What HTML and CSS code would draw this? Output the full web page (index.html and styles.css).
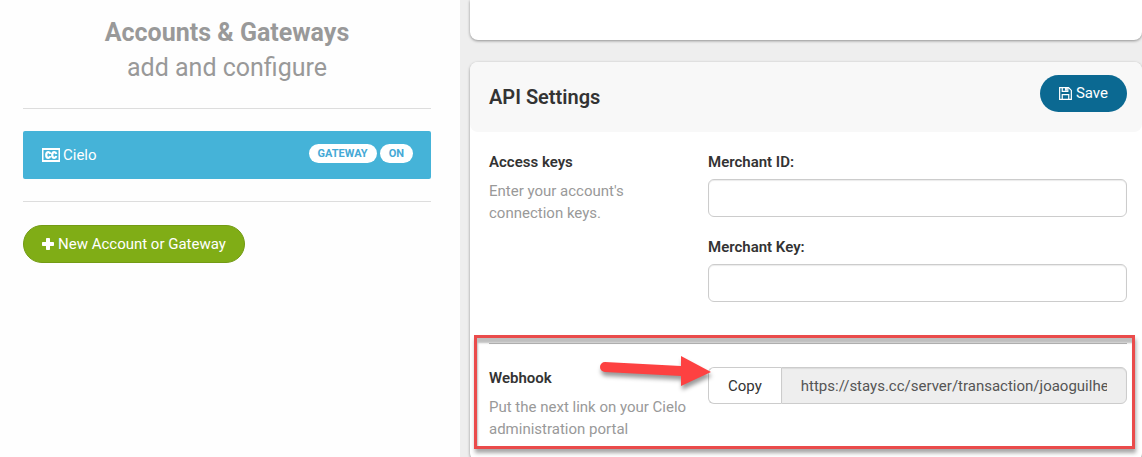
FILE: index.html
```
<!DOCTYPE html>
<html lang="en">
<head>
  <meta charset="UTF-8">
  <meta name="viewport" content="width=device-width, initial-scale=1.0">
  <title>Accounts &amp; Gateways</title>
  <link rel="stylesheet" href="styles.css">
</head>
<body>

<div class="layout">
  <aside class="sidebar">
    <h1 class="sidebar-title"><strong>Accounts &amp; Gateways</strong><br>add and configure</h1>
    <hr>
    <a class="account" href="#cielo">
      <svg class="icon-cc" viewBox="0 0 18 14" width="18" height="14" aria-hidden="true">
        <path fill="#fff" fill-rule="evenodd" d="M0 0h18v14H0zM1.500 2v10h15V2z"/>
        <path fill="none" stroke="#fff" stroke-width="2.200" d="M8.300 5.900C8 4.500 7.300 4.200 6.300 4.200 4.900 4.200 4.200 5.300 4.200 7s.7 2.800 2.100 2.800c1 0 1.700-.4 2-1.700M14.300 5.900C14 4.500 13.300 4.200 12.300 4.200c-1.400 0-2.100 1.100-2.100 2.800s.7 2.800 2.100 2.800c1 0 1.700-.4 2-1.700"/>
      </svg>
      <span class="account-name">Cielo</span>
      <span class="badge">GATEWAY</span>
      <span class="badge">ON</span>
    </a>
    <hr>
    <button class="btn btn-green" type="button">
      <svg viewBox="0 0 12 12" width="12" height="12" aria-hidden="true">
        <path fill="#fff" d="M4.800 0h2.400q.8 0 .8.800V4h3.200q.8 0 .8.800v2.400q0 .8-.8.800H8v3.200q0 .8-.8.800H4.800q-.8 0-.8-.8V8H.8Q0 8 0 7.200V4.800Q0 4 .8 4H4V.8Q4 0 4.800 0z"/>
      </svg>
      New Account or Gateway
    </button>
  </aside>

  <main class="content">
    <section class="card card-prev"></section>

    <section class="card">
      <header class="card-header">
        <h2>API Settings</h2>
        <button class="btn btn-blue" type="button">
          <svg viewBox="0 0 14 14" width="13" height="13" aria-hidden="true">
            <path fill="none" stroke="#fff" stroke-width="1.300" d="M.7.7h9.600l3 3v9.600H.7zM3.500.7v4h6v-4M3.500 13.300v-5h7v5"/>
            <path fill="#fff" d="M6.500 1h2v3h-2z"/>
          </svg>
          Save
        </button>
      </header>

      <div class="row">
        <div class="row-info">
          <h3>Access keys</h3>
          <p>Enter your account's connection keys.</p>
        </div>
        <div class="row-fields">
          <div class="field">
            <label for="merchant-id">Merchant ID:</label>
            <input class="input" type="text" id="merchant-id">
          </div>
          <div class="field">
            <label for="merchant-key">Merchant Key:</label>
            <input class="input" type="text" id="merchant-key">
          </div>
        </div>
      </div>

      <div class="row row-webhook">
        <div class="row-info">
          <h3 id="webhook-label">Webhook</h3>
          <p>Put the next link on your Cielo administration portal</p>
        </div>
        <div class="copy-group">
          <button class="btn-copy" type="button">Copy</button>
          <input class="input" type="text" aria-labelledby="webhook-label" value="https://stays.cc/server/transaction/joaoguilherme" readonly>
          <svg class="arrow" viewBox="0 0 124 44" width="124" height="44" aria-hidden="true">
            <path fill="#fd4141" d="M10 6 L86 10 V0 L116 16 L86 30 V20 L10 16 A5 5 0 0 1 10 6z"/>
          </svg>
        </div>
        <div class="highlight"></div>
      </div>
    </section>
  </main>
</div>

</body>
</html>
```

FILE: styles.css
```
* { box-sizing: border-box; }
html, body {
  height: 100%;
  margin: 0;
  overflow: hidden;
}
body {
  background: #eee;
  color: #333;
  font-family: Roboto, "Liberation Sans", sans-serif;
  font-size: 15px;
  line-height: 22px;
}
h1, h2, h3, p { margin: 0; }
button, input { font: inherit; color: inherit; }

.layout {
  display: grid;
  grid-template-columns: 460px minmax(0, 1fr);
  min-height: 100%;
}

/* sidebar */
.sidebar {
  background: #fefefe;
  padding: 15px 29px 20px 23px;
}
.sidebar-title {
  color: #999;
  font-size: 25px;
  font-weight: 400;
  line-height: 35px;
  text-align: center;
}
.sidebar hr {
  border: 0;
  border-top: 1px solid #ddd;
  margin: 22px 0 23px;
}
.sidebar-title + hr { margin: 23px 0 22px; }
.account {
  display: flex;
  align-items: center;
  gap: 3px;
  height: 48px;
  padding: 0 18px 0 19px;
  border-radius: 2px;
  background: #45b3d8;
  color: #fff;
  text-decoration: none;
}
.account-name { flex: 1; }
.badge {
  margin-bottom: 3px;
  padding: 0 9px;
  border-radius: 10px;
  background: #fff;
  color: #45a9d6;
  font-size: 11px;
  font-weight: 700;
  line-height: 19px;
}

/* buttons */
.btn {
  display: inline-flex;
  align-items: center;
  gap: 4px;
  height: 38px;
  padding: 0 18px;
  border: 1px solid transparent;
  border-radius: 19px;
  color: #fff;
  cursor: pointer;
}
.btn-green {
  background: #80ad16;
  border-color: #739b14;
}
.btn-blue {
  height: 37px;
  background: #0b6992;
}

/* cards */
.content {
  display: flex;
  flex-direction: column;
  gap: 22px;
  padding-left: 10px;
}
.card {
  border-radius: 8px;
  background: #fff;
  box-shadow: 0 1px 3px rgba(0, 0, 0, 0.4);
}
.card-prev {
  height: 40px;
  border-radius: 0 0 8px 8px;
}
.card-header {
  display: flex;
  align-items: center;
  justify-content: space-between;
  height: 70px;
  padding: 0 15px 8px 19px;
  border-radius: 8px;
  background: #f8f8f8;
}
.card-header h2 {
  font-size: 20px;
  font-weight: 600;
  padding-top: 8px;
}
.row {
  position: relative;
  display: grid;
  grid-template-columns: 200px minmax(0, 1fr);
  column-gap: 19px;
  margin: 0 15px 0 19px;
  padding: 19px 0 41px;
}
.row h3, .row label {
  display: block;
  font-size: 15px;
  font-weight: 600;
  margin-bottom: 6px;
}
.row h3 { margin-bottom: 7px; }
.row p { color: #999; }
.row-fields {
  display: grid;
  gap: 19px;
}
.input {
  display: block;
  width: 100%;
  height: 38px;
  padding: 0 19px;
  border: 1px solid #ccc;
  border-radius: 6px;
  background: #fff;
  box-shadow: inset 0 1px 1px rgba(0, 0, 0, 0.08);
}

/* webhook */
.row-webhook {
  border-top: 1px solid #bbb;
  padding: 23px 0 21px;
}
.copy-group {
  position: relative;
  display: flex;
  align-items: flex-start;
}
.btn-copy, .copy-group .input { height: 37px; }
.btn-copy {
  padding: 0 19px;
  border: 1px solid #ccc;
  border-right: 0;
  border-radius: 6px 0 0 6px;
  background: #fff;
}
.copy-group .input {
  flex: 1;
  min-width: 0;
  border-radius: 0 6px 6px 0;
  background: #eee;
  color: #555;
}

/* callout drawn over the webhook row */
.highlight {
  position: absolute;
  inset: -9px -8px 12px -15px;
  border: 3px solid #ea4b4b;
  box-shadow: 1px 4px 4px rgba(0, 0, 0, 0.35), inset 1px 5px 2px rgba(0, 0, 0, 0.25);
  pointer-events: none;
}
.arrow {
  position: absolute;
  top: -11px;
  left: -113px;
  overflow: visible;
  filter: drop-shadow(1px 4px 2px rgba(0, 0, 0, 0.4));
  pointer-events: none;
}
```
